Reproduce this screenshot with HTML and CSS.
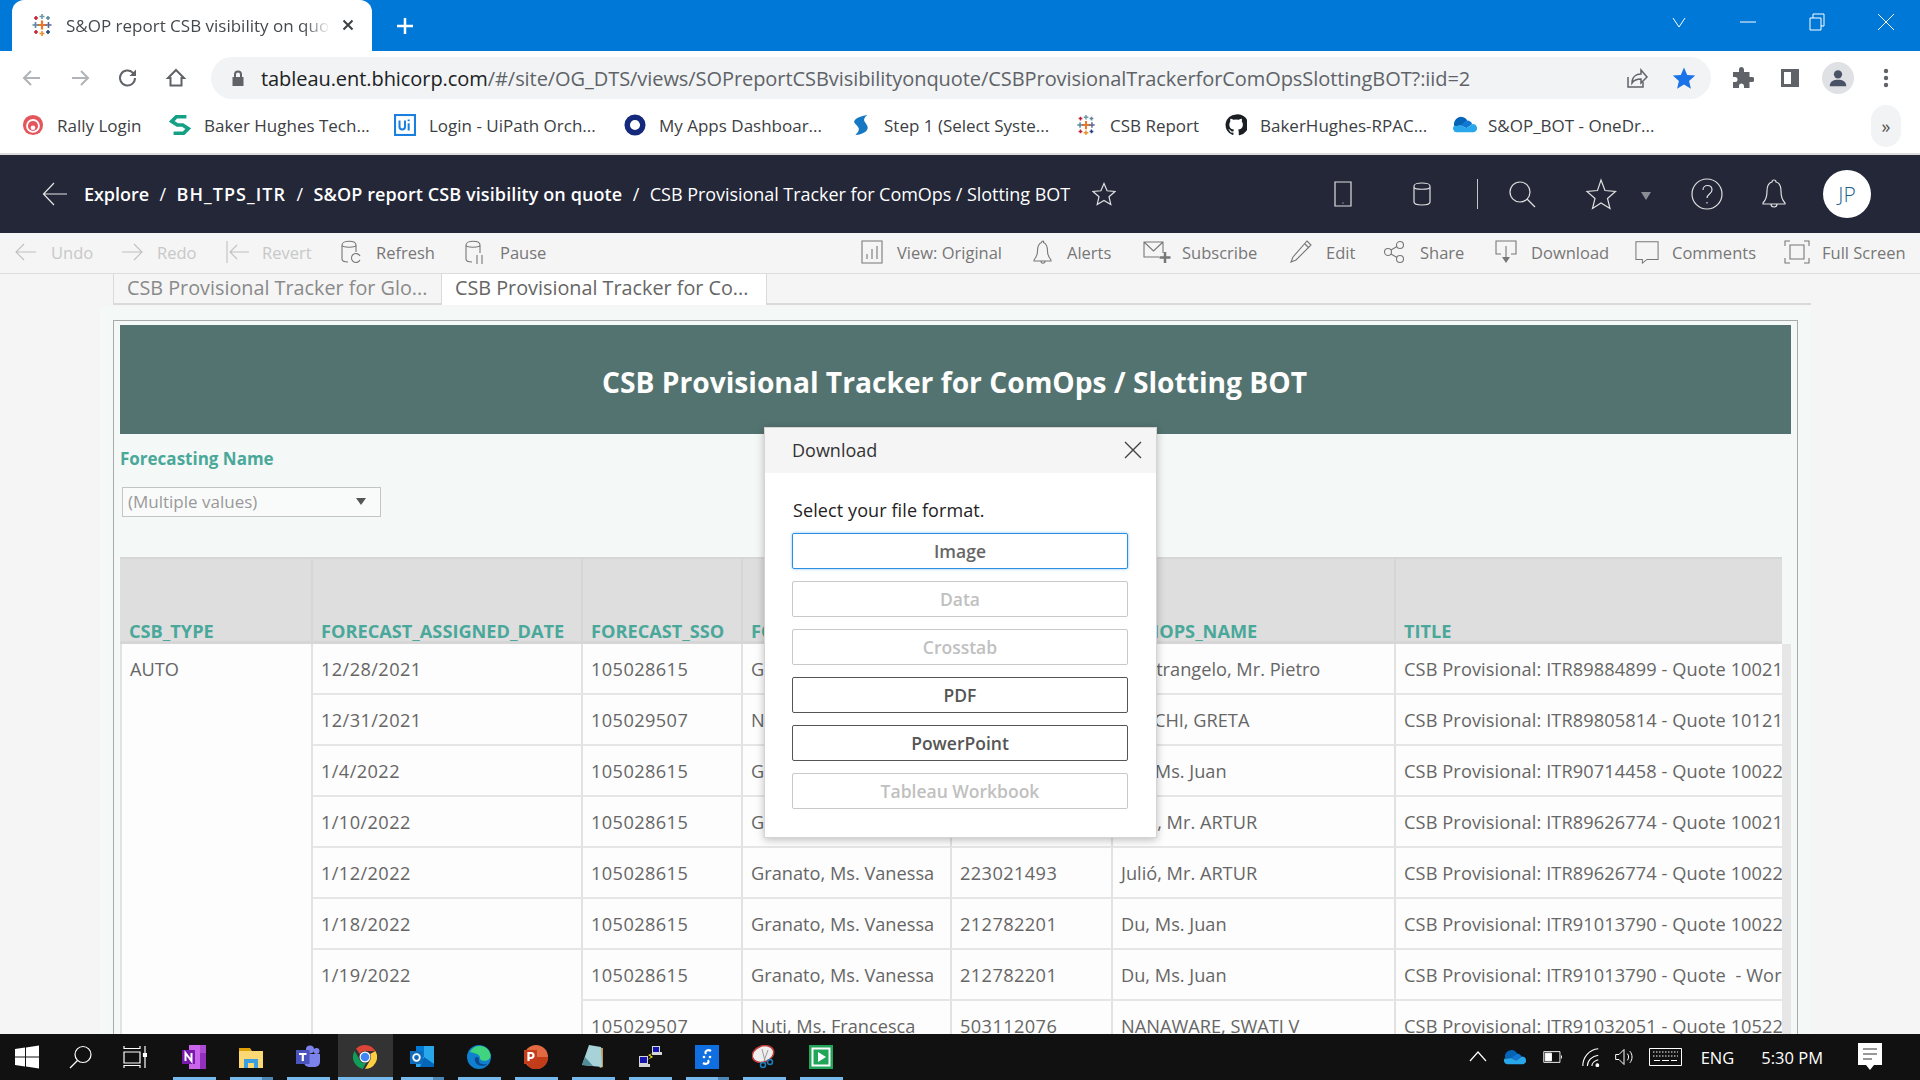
FILE: index.html
```html
<!DOCTYPE html>
<html lang="en">
<head>
<meta charset="utf-8">
<title>S&amp;OP report CSB visibility on quote</title>
<link rel="stylesheet" href="styles.css">
</head>
<body>
<svg class="defs" width="0" height="0" aria-hidden="true">
  <symbol id="tableau" viewBox="0 0 24 24">
    <g fill="none" stroke-width="1.6">
      <path d="M12 7.500v9M7.500 12h9" stroke="#e8762d" stroke-width="2.200"/>
      <path d="M5.500 9v6M2.500 12h6" stroke="#5b879b"/>
      <path d="M18.500 9v6M15.500 12h6" stroke="#5b6591"/>
      <path d="M12 1v5M9.500 3.500h5" stroke="#7099a6"/>
      <path d="M12 18v5M9.500 20.500h5" stroke="#eb912b"/>
      <path d="M6 3v4M4 5h4" stroke="#c72035"/>
      <path d="M18 3v4M16 5h4" stroke="#59879b"/>
      <path d="M6 17v4M4 19h4" stroke="#c72035"/>
      <path d="M18 17v4M16 19h4" stroke="#1f457e"/>
    </g>
  </symbol>
  <symbol id="onedrive" viewBox="0 0 32 24">
    <path d="M13 2a8 8 0 0 1 7 4.500l-7 6-9 1A9 9 0 0 1 13 2z" fill="#0364b8"/>
    <path d="M20 6.500a6.500 6.500 0 0 1 6 4.500l-7 5-7-3.500z" fill="#0f78d4"/>
    <path d="M4 13.500l8-1 7 3.500 7-5a5 5 0 0 1 3 9.500 4 4 0 0 1-2 .5H7a5 5 0 0 1-3-8.500z" fill="#28a8ea"/>
  </symbol>
</svg>

<header class="tabstrip">
  <div class="tab">
    <svg class="ico24"><use href="#tableau"/></svg>
    <span class="tab-title">S&amp;OP report CSB visibility on quote</span>
    <svg class="tab-x" viewBox="0 0 12 12"><path d="M1.500 1.500l9 9M10.500 1.500l-9 9"/></svg>
  </div>
  <svg class="newtab" viewBox="0 0 18 18"><path d="M9 1v16M1 9h16"/></svg>
  <div class="winbtns">
    <svg class="win-ico" viewBox="0 0 20 20"><path d="M4 6l6 9 6-9"/></svg>
    <svg class="win-ico" viewBox="0 0 20 20"><path d="M2 10h16"/></svg>
    <svg class="win-ico" viewBox="0 0 20 20"><path d="M3 6h11v12H3zM6 6V2h11v12h-3"/></svg>
    <svg class="win-ico" viewBox="0 0 20 20"><path d="M2 2l16 16M18 2L2 18"/></svg>
  </div>
</header>

<nav class="omnibar">
  <svg class="nav-ico dim" viewBox="0 0 24 24"><path d="M20 12H5M11 5l-7 7 7 7"/></svg>
  <svg class="nav-ico dim" viewBox="0 0 24 24"><path d="M4 12h15M13 5l7 7-7 7"/></svg>
  <svg class="nav-ico" viewBox="0 0 24 24"><path d="M19 12a7.500 7.500 0 1 1-2.300-5.400L19 9"/><path class="solid" d="M20 3.500v6.500h-6.500z"/></svg>
  <svg class="nav-ico" viewBox="0 0 24 24"><path d="M12 4l8 8h-2.500v7.500h-11V12H4z"/></svg>
  <div class="urlbar">
    <svg class="lock" viewBox="0 0 14 18"><path d="M3 8V5.500a4 4 0 0 1 8 0V8h1.500v9h-11V8zm2 0h4V5.500a2 2 0 0 0-4 0z"/></svg>
    <div class="url"><span class="host">tableau.ent.bhicorp.com</span>/#/site/OG_DTS/views/SOPreportCSBvisibilityonquote/CSBProvisionalTrackerforComOpsSlottingBOT?:iid=2</div>
    <svg class="nav-ico small" viewBox="0 0 24 24"><path d="M4 11v10h15v-5"/><path d="M8 17c0-6 4-9 9-9V4l6 7-6 6v-4c-4 0-7 1-9 4z"/></svg>
    <svg class="bm-star" viewBox="0 0 24 24"><path d="M12 1.500l3.200 7.400 8 .7-6.100 5.300 1.800 7.900L12 18.600l-6.900 4.200 1.800-7.900L.8 9.600l8-.7z"/></svg>
  </div>
  <div class="ext-icons">
    <svg class="ext" viewBox="0 0 24 24"><path d="M9 3.500a2.500 2.500 0 0 1 5 0V6h5.500v5H22a2.500 2.500 0 0 1 0 5h-2.500v6H14v-2a2.500 2.500 0 0 0-5 0v2H3v-6h2a2.500 2.500 0 0 0 0-5H3V6h6z"/></svg>
    <svg class="ext" viewBox="0 0 24 24"><path d="M3 3h18v18H3zm3 3v12h7V6z" fill-rule="evenodd"/></svg>
    <span class="profile"><svg viewBox="0 0 24 24"><circle cx="12" cy="8" r="4.500"/><path d="M3 21c0-5 4-7 9-7s9 2 9 7z"/></svg></span>
    <svg class="ext" viewBox="0 0 24 24"><circle cx="12" cy="5" r="2.200"/><circle cx="12" cy="12" r="2.200"/><circle cx="12" cy="19" r="2.200"/></svg>
  </div>
</nav>

<nav class="bookmarks">
  <div class="bm"><svg class="fav" viewBox="0 0 24 24"><circle cx="12" cy="12" r="11" fill="#e4565c"/><circle cx="12" cy="13" r="6.500" fill="none" stroke="#fff" stroke-width="2"/><circle cx="12" cy="15" r="2.500" fill="#fff"/></svg>Rally Login</div>
  <div class="bm"><svg class="fav" viewBox="0 0 24 24"><path d="M19 3H8L3 8l6 4h6l6 4-5 5H5" fill="none" stroke="#14a085" stroke-width="4"/></svg>Baker Hughes Tech...</div>
  <div class="bm"><svg class="fav" viewBox="0 0 24 24"><rect x="1" y="1" width="22" height="22" fill="#fff" stroke="#1b7fe0" stroke-width="2.500"/><path d="M6 7v7a3 3 0 0 0 6 0V7M16 10v8M16 6v2" fill="none" stroke="#1b7fe0" stroke-width="2.200"/></svg>Login - UiPath Orch...</div>
  <div class="bm"><svg class="fav" viewBox="0 0 24 24"><circle cx="12" cy="12" r="8.500" fill="#fff" stroke="#14297c" stroke-width="6"/></svg>My Apps Dashboar...</div>
  <div class="bm"><svg class="fav" viewBox="0 0 24 24"><path d="M20 1C8 3 3 7 7 11s6 6 0 12c9-1 15-5 13-10S13 7 20 1z" fill="#1678c2"/></svg>Step 1 (Select Syste...</div>
  <div class="bm"><svg class="fav"><use href="#tableau"/></svg>CSB Report</div>
  <div class="bm"><svg class="fav" viewBox="0 0 24 24"><path fill="#1b1f23" d="M12 .5a11.500 11.500 0 0 0-3.600 22.400c.6.100.8-.3.800-.6v-2c-3.200.7-3.900-1.400-3.900-1.400-.5-1.300-1.300-1.700-1.300-1.700-1-.7.100-.7.100-.7 1.200.1 1.800 1.200 1.800 1.200 1 1.800 2.700 1.300 3.300 1 .1-.8.400-1.300.8-1.600-2.600-.3-5.300-1.300-5.300-5.700 0-1.300.5-2.300 1.200-3.100-.1-.3-.5-1.500.1-3.100 0 0 1-.3 3.200 1.200a11 11 0 0 1 5.800 0c2.200-1.500 3.200-1.200 3.200-1.200.6 1.600.2 2.800.1 3.100.7.800 1.200 1.900 1.200 3.100 0 4.400-2.700 5.400-5.300 5.700.4.400.8 1.100.8 2.200v3.300c0 .3.200.7.800.6A11.500 11.500 0 0 0 12 .5z"/></svg>BakerHughes-RPAC...</div>
  <div class="bm narrow-gap"><svg class="fav wide"><use href="#onedrive"/></svg>S&amp;OP_BOT - OneDr...</div>
  <span class="bm-more">»</span>
</nav>

<section class="t-header">
  <svg class="t-back" viewBox="0 0 26 26"><path d="M25 13H2M12 2L1.500 13 12 24"/></svg>
  <div class="crumbs"><b>Explore</b><i>/</i><b class="wide-crumb">BH_TPS_ITR</b><i>/</i><b class="report-crumb">S&amp;OP report CSB visibility on quote</b><i>/</i><span>CSB Provisional Tracker for ComOps / Slotting BOT</span></div>
  <svg class="t-ico star-s" viewBox="0 0 24 24"><path d="M12 1.500l3.100 7.300 7.900.7-6 5.200 1.800 7.800L12 18.400l-6.800 4.100L7 14.700l-6-5.200 7.900-.7z"/></svg>
  <div class="t-right">
    <svg class="t-ico" viewBox="0 0 28 28"><path d="M6 2h16v24H6zM13.500 23h1"/></svg>
    <svg class="t-ico" viewBox="0 0 28 28"><path d="M6 6v16c0 4 16 4 16 0V6c0-4-16-4-16 0zm0 1c0 3 16 3 16 0"/></svg>
    <span class="t-divider"></span>
    <svg class="t-ico" viewBox="0 0 28 28"><circle cx="12" cy="12" r="10"/><path d="M19 19l8 8"/></svg>
    <svg class="t-ico big" viewBox="0 0 32 32"><path d="M16 2l4 10.500 10.500 1-8 7 2.500 10L16 25l-8.500 5.500L10 20.500l-8-7 10.500-1z"/></svg>
    <span class="t-caret"></span>
    <svg class="t-ico big" viewBox="0 0 32 32"><circle cx="16" cy="16" r="15"/><path d="M12 12c0-6 9-6 9 0 0 4-5 4-5 8M16 24v1.500"/></svg>
    <svg class="t-ico big" viewBox="0 0 32 32"><path d="M16 2c-1.500 0-2 1-2 2-4 1-5 5-5 9 0 6-1 9-4 12v1h22v-1c-3-3-4-6-4-12 0-4-1-8-5-9 0-1-.5-2-2-2zM13 26c0 4 6 4 6 0"/></svg>
    <span class="avatar">JP</span>
  </div>
</section>

<section class="toolbar">
  <div class="tool off"><svg viewBox="0 0 24 24"><path d="M22 12H2M10 4l-8 8 8 8"/></svg>Undo</div>
  <div class="tool off"><svg viewBox="0 0 24 24"><path d="M2 12h20M14 4l8 8-8 8"/></svg>Redo</div>
  <div class="tool off"><svg viewBox="0 0 24 24"><path d="M2 1v22M24 12H5M12 5l-7 7 7 7"/></svg>Revert</div>
  <div class="tool"><svg viewBox="0 0 24 24"><path d="M3 5c0-5 14-5 14 0v7M3 5c0 3 14 3 14 0M3 5v14c0 2 3 3 6 3"/><path d="M21 16a4.500 4.500 0 1 0 0 4"/></svg>Refresh</div>
  <div class="tool"><svg viewBox="0 0 24 24"><path d="M3 5c0-5 14-5 14 0v8M3 5c0 3 14 3 14 0M3 5v14c0 2 3 3 6 3M14 15v9M19 15v9"/></svg>Pause</div>
  <div class="tool"><svg viewBox="0 0 24 24"><path d="M2 1h20v22H2zM7 14v5M12 9v10M17 6v13"/></svg>View: Original</div>
  <div class="tool"><svg viewBox="0 0 24 24"><path d="M12 1c-1 0-1.500.7-1.500 1.500C7 4 6.500 8 6.500 11c0 4-1 6-3.500 9v1h17v-1c-2.500-3-3.500-5-3.500-9 0-3-.5-7-4-8.500C12.500 1.700 13 1 12 1zM10 21c0 3 4 3 4 0" transform="translate(1 0)"/></svg>Alerts</div>
  <div class="tool"><svg viewBox="0 0 28 24"><path d="M20 13V2H1v15h15M1 2l9.500 9L20 2"/><path d="M22 12v11M16.500 17.500h11" stroke-width="2.500"/></svg>Subscribe</div>
  <div class="tool"><svg viewBox="0 0 24 24"><path d="M18 1l4 4L7 20l-5 2 2-5zM15.500 3.500l4.500 4.500"/></svg>Edit</div>
  <div class="tool"><svg viewBox="0 0 24 24"><circle cx="17" cy="5" r="3.500"/><circle cx="5" cy="12" r="3.500"/><circle cx="17" cy="19" r="3.500"/><path d="M8 10l6-3.500M8 14l6 3.500"/></svg>Share</div>
  <div class="tool"><svg viewBox="0 0 24 24"><path d="M7 14H2V1h20v13h-5M12 6v15"/><path class="fillp" d="M8 17h8l-4 6z"/></svg>Download</div>
  <div class="tool"><svg viewBox="0 0 26 26"><path d="M1 2h24v19H13l-5 4v-4H1z"/></svg>Comments</div>
  <div class="tool"><svg viewBox="0 0 26 24"><path d="M1 6V1h5M20 1h5v5M1 18v5h5M25 18v5h-5M6 5h14v14H6z"/></svg>Full Screen</div>
</section>

<main class="workspace">
  <div class="sheet-tabs">
    <div class="sheet">CSB Provisional Tracker for Glo...</div>
    <div class="sheet active">CSB Provisional Tracker for Co...</div>
  </div>
  <div class="canvas">
    <div class="frame">
      <h1 class="banner">CSB Provisional Tracker for ComOps / Slotting BOT</h1>
      <div class="filter-title">Forecasting Name</div>
      <div class="filter-box"><span>(Multiple values)</span><i></i></div>
      <div class="table-wrap">
        <table class="data">
          <colgroup><col class="c1"><col class="c2"><col class="c3"><col class="c4"><col class="c5"><col class="c6"><col class="c7"></colgroup>
          <thead><tr><th class="first">CSB_TYPE</th><th>FORECAST_ASSIGNED_DATE</th><th>FORECAST_SSO</th><th>FORECAST_NAME</th><th>COMOPS_SSO</th><th class="tight">COMOPS_NAME</th><th>TITLE</th></tr></thead>
          <tbody>
            <tr><td class="type" rowspan="8">AUTO</td><td class="n">12/28/2021</td><td class="n">105028615</td><td>Granato, Ms. Vanessa</td><td class="n">223021493</td><td>Mastrangelo, Mr. Pietro</td><td>CSB Provisional: ITR89884899 - Quote 10021</td></tr>
            <tr><td class="n">12/31/2021</td><td class="n">105029507</td><td>Nuti, Ms. Francesca</td><td class="n">503112076</td><td>SACCHI, GRETA</td><td>CSB Provisional: ITR89805814 - Quote 10121</td></tr>
            <tr><td class="n">1/4/2022</td><td class="n">105028615</td><td>Granato, Ms. Vanessa</td><td class="n">212782201</td><td>Du, Ms. Juan</td><td>CSB Provisional: ITR90714458 - Quote 10022</td></tr>
            <tr><td class="n">1/10/2022</td><td class="n">105028615</td><td>Granato, Ms. Vanessa</td><td class="n">223021493</td><td>Julió, Mr. ARTUR</td><td>CSB Provisional: ITR89626774 - Quote 10021</td></tr>
            <tr><td class="n">1/12/2022</td><td class="n">105028615</td><td>Granato, Ms. Vanessa</td><td class="n">223021493</td><td>Julió, Mr. ARTUR</td><td>CSB Provisional: ITR89626774 - Quote 10022</td></tr>
            <tr><td class="n">1/18/2022</td><td class="n">105028615</td><td>Granato, Ms. Vanessa</td><td class="n">212782201</td><td>Du, Ms. Juan</td><td>CSB Provisional: ITR91013790 - Quote 10022</td></tr>
            <tr><td class="n span2" rowspan="2">1/19/2022</td><td class="n">105028615</td><td>Granato, Ms. Vanessa</td><td class="n">212782201</td><td>Du, Ms. Juan</td><td>CSB Provisional: ITR91013790 - Quote &nbsp;- Workflow</td></tr>
            <tr><td class="n">105029507</td><td>Nuti, Ms. Francesca</td><td class="n">503112076</td><td>NANAWARE, SWATI V</td><td>CSB Provisional: ITR91032051 - Quote 10522</td></tr>
          </tbody>
        </table>
        <div class="v-scroll"></div>
      </div>
    </div>
  </div>
  <div class="dialog">
    <div class="dlg-head"><span>Download</span><svg viewBox="0 0 18 18"><path d="M1 1l16 16M17 1L1 17"/></svg></div>
    <div class="dlg-body">
      <p>Select your file format.</p>
      <button class="btn focus">Image</button>
      <button class="btn off">Data</button>
      <button class="btn off">Crosstab</button>
      <button class="btn on">PDF</button>
      <button class="btn on">PowerPoint</button>
      <button class="btn off">Tableau Workbook</button>
    </div>
  </div>
</main>

<footer class="taskbar">
  <div class="sys"><svg viewBox="0 0 24 24" class="tb"><path fill="#fff" d="M0 4l10-1.400V11.500H0zM11 2.400L24 .5v11H11zM0 12.500h10v8.900L0 20zM11 12.500h13v11l-13-1.900z"/></svg></div>
  <div class="sys"><svg viewBox="0 0 24 24" class="tb line"><circle cx="14" cy="9.500" r="8"/><path d="M8.500 15.500L1 23"/></svg></div>
  <div class="sys"><svg viewBox="0 0 24 24" class="tb line"><path d="M1 1v2.500h16V1M1 7h16v11H1zM1 23v-2.500h16V23M22 1v8M22 12v11"/><path d="M20.500 8.500h3v3h-3z" fill="#fff"/></svg></div>
  <div class="apps">
    <div class="app"><svg viewBox="0 0 24 24" class="tb"><path fill="#ca64ea" d="M7 0h17v24H7z"/><path fill="#ae4bd5" d="M18 0h6v8h-6z"/><path fill="#7719aa" d="M18 16h6v8h-6zM18 8h6v8h-6z" opacity=".7"/><path fill="#7719aa" d="M0 5h13v14H0z"/><path stroke="#fff" stroke-width="2" fill="none" d="M3.500 16V8l6 8V8"/></svg></div>
    <div class="app split"><svg viewBox="0 0 24 24" class="tb"><path fill="#e0a106" d="M0 3h11l2 3H0z"/><path fill="#fcd874" d="M0 6h24v17H0z"/><path fill="#3a9ee0" d="M5 23v-9h14v9h-4v-5H9v5z"/></svg></div>
    <div class="app"><svg viewBox="0 0 24 24" class="tb"><circle cx="20.500" cy="6" r="3" fill="#7b83eb"/><circle cx="14" cy="4.500" r="4" fill="#7b83eb"/><path fill="#7b83eb" d="M8 9h16v8a5 5 0 0 1-5 5h-6a5 5 0 0 1-5-5z"/><path fill="#4b53bc" d="M0 5h13.500v14H0z"/><path stroke="#fff" stroke-width="2.200" fill="none" d="M3 9h7.500M6.800 9v7"/></svg></div>
    <div class="app active"><svg viewBox="0 0 24 24" class="tb"><path fill="#db4437" d="M12 0a12 12 0 0 1 10.400 6H12a6 6 0 0 0-5.200 3L3 3.500A12 12 0 0 1 12 0z"/><path fill="#0f9d58" d="M1.600 6l5.200 9a6 6 0 0 0 6.200 3l-3.200 5.900A12 12 0 0 1 1.600 6z"/><path fill="#ffcd40" d="M22.400 6A12 12 0 0 1 12 24l5.200-9a6 6 0 0 0 0-6z"/><circle cx="12" cy="12" r="5.500" fill="#fff"/><circle cx="12" cy="12" r="4.300" fill="#4285f4"/></svg></div>
    <div class="app split"><svg viewBox="0 0 24 24" class="tb"><path fill="#28a8ea" d="M6 1h18v21H6z"/><path fill="#0078d4" d="M6 1h8v11H6z"/><path fill="#0364b8" d="M14 12l10 7v3H10z"/><path fill="#0f6cbd" d="M0 6h13v13H0z"/><circle cx="6.500" cy="12.500" r="3.300" fill="none" stroke="#fff" stroke-width="1.800"/></svg></div>
    <div class="app"><svg viewBox="0 0 24 24" class="tb"><circle cx="12" cy="12" r="12" fill="#0f7fd0"/><path fill="#3fd47d" d="M3 7a11 11 0 0 1 20 1c2 5-2 8-5 8s-6-1-5-4c-1-3-6-4-10-5z"/><path fill="#0c4a8f" d="M8 13c-1 5 3 8 8 8 2 0 3-1 4-2-4 1-9 0-8-5 0-2-3-3-4-1z"/></svg></div>
    <div class="app"><svg viewBox="0 0 24 24" class="tb"><circle cx="12" cy="12" r="12" fill="#e26a43"/><path fill="#c33c1a" d="M12 12h12a12 12 0 0 1-21 8z"/><path fill="#c43e1c" d="M0 5h13v14H0z"/><path stroke="#fff" stroke-width="2.200" fill="none" d="M4.500 16V8h2.500a2.500 2.500 0 0 1 0 5H4.500"/></svg></div>
    <div class="app"><svg viewBox="0 0 24 24" class="tb"><path fill="#c09a5c" d="M8 2l14 1v19l-3 1z"/><path fill="#a7d2d8" d="M8 0l12 2 1 20-20-2z"/><path fill="#4f8c98" d="M4 12l8 9-11-1z"/></svg></div>
    <div class="app"><svg viewBox="0 0 24 24" class="tb"><path fill="#d5d5d5" d="M14 1h8v6h2v3H14z"/><path fill="#1414b0" d="M15 2h6v5h-6z"/><path fill="#d5d5d5" d="M1 11h9v8H1v3h11v-3H1z"/><path fill="#1414b0" d="M2 12h7v6H2z"/><path fill="#f5ea1b" d="M15 8l-5 2 3 2-4 3 6-3-3-2z"/></svg></div>
    <div class="app split"><svg viewBox="0 0 24 24" class="tb"><rect width="24" height="24" fill="#0f6fe0"/><path d="M16 6c-3-2-7 0-5 3M8 18c3 2 7 0 5-3" fill="none" stroke="#fff" stroke-width="2.200"/><circle cx="9" cy="12" r="1.300" fill="#fff"/><circle cx="15" cy="12" r="1.300" fill="#fff"/></svg></div>
    <div class="app"><svg viewBox="0 0 24 24" class="tb"><ellipse cx="11" cy="9" rx="11" ry="8" fill="#eee" stroke="#c23a3a" stroke-width="1.500" transform="rotate(-20 11 9)"/><path d="M10 4l3 12M16 5l-4 11" stroke="#999" fill="none"/><circle cx="11" cy="20" r="2.500" fill="none" stroke="#1b80c0" stroke-width="1.500"/><circle cx="18" cy="17" r="2.500" fill="none" stroke="#1b80c0" stroke-width="1.500"/></svg></div>
    <div class="app"><svg viewBox="0 0 24 24" class="tb"><rect width="24" height="24" fill="#21a559"/><rect x="2.500" y="2.500" width="19" height="19" fill="#fff"/><rect x="4.500" y="4.500" width="15" height="15" fill="#21a559"/><path d="M9 7l8 5-8 5z" fill="#fff"/></svg></div>
  </div>
  <div class="tray">
    <svg class="tr caret-up" viewBox="0 0 20 20"><path d="M2 14l8-9 8 9"/></svg>
    <svg class="tr cloud"><use href="#onedrive"/></svg>
    <svg class="tr battery" viewBox="0 0 26 20"><path d="M1 3h21v14H1zM24 8v4"/><path d="M3 5h8v10H3z" fill="#fff"/></svg>
    <svg class="tr wifi" viewBox="0 0 22 22"><path d="M2 21C2 11 9 3 19 2M7 21c0-6 5-11 12-12M12 21c0-3 3-6 7-7"/><circle cx="18" cy="20" r="1.500" fill="#fff"/></svg>
    <svg class="tr volume" viewBox="0 0 24 24"><path d="M2 9v6h4l6 6V3L6 9zM16 8c2 2 2 6 0 8M19 5c3.500 4 3.500 10 0 14"/></svg>
    <svg class="tr kbd" viewBox="0 0 33 18"><path d="M.5.5h32v17H.5zM5 12.500h6M13 12.500h7M22 12.500h6"/><path d="M4 4h25M4 8h25" stroke-dasharray="1.500 1.500"/></svg>
    <span class="eng">ENG</span>
    <span class="clock">5:30 PM</span>
    <svg class="tr note" viewBox="0 0 24 28"><path class="fillw" d="M0 0h24v22h-8l-4 5-4-5H0z"/><path d="M5 6h14M5 11h14M5 16h9" class="dk"/></svg>
  </div>
</footer>
</body>
</html>
```

FILE: styles.css
```css
* { box-sizing: border-box; }
html, body { margin: 0; height: 100%; }
body {
  width: 1920px; height: 1080px; overflow: hidden;
  display: flex; flex-direction: column;
  font-family: "Open Sans", "Noto Sans", sans-serif; color: #333;
  background: #f5f5f5; position: relative;
}
.defs { position: absolute; }
svg { display: block; flex: none; }

/* chrome tab strip */
.tabstrip { height: 51px; flex: none; background: #0078d7; display: flex; align-items: flex-end; padding-left: 12px; }
.tab { width: 360px; height: 51px; background: #fff; border-radius: 12px 12px 0 0; display: flex; align-items: center; padding: 0 18px 1px 18px; gap: 12px; }
.ico24 { width: 24px; height: 24px; }
.tab-title { flex: 1; font-size: 17px; color: #45494d; white-space: nowrap; overflow: hidden; -webkit-mask-image: linear-gradient(90deg, #000 90%, transparent); mask-image: linear-gradient(90deg, #000 90%, transparent); }
.tab-x { width: 12px; height: 12px; fill: none; stroke: #3c4043; stroke-width: 2; }
.newtab { width: 18px; height: 18px; margin: 0 0 16px 24px; fill: none; stroke: #fff; stroke-width: 2.500; }
.winbtns { margin-left: auto; display: flex; align-self: stretch; align-items: center; gap: 49px; padding: 0 24px 8px 0; }
.win-ico { width: 20px; height: 20px; fill: none; stroke: #fff; stroke-width: 1; }

/* omnibar */
.omnibar { height: 52px; flex: none; background: #fff; display: flex; align-items: center; padding: 2px 0 0 20px; gap: 24px; }
.nav-ico { width: 24px; height: 24px; fill: none; stroke: #5f6368; stroke-width: 2; }
.nav-ico.dim { stroke: #b0b3b7; }
.nav-ico .solid { fill: #5f6368; stroke: none; }
.nav-ico.small { stroke-width: 1.500; }
.urlbar { margin-left: -1px; margin-right: -5px; width: 1500px; height: 42px; border-radius: 21px; background: #f1f3f4; display: flex; align-items: center; padding: 0 15px 0 20px; gap: 16px; flex: none; }
.lock { width: 14px; height: 18px; fill: #5f6368; }
.url { flex: 1; font-size: 20px; color: #5f6368; white-space: nowrap; overflow: hidden; letter-spacing: -.065px; }
.host { color: #202124; }
.bm-star { width: 24px; height: 24px; fill: #1a73e8; margin-left: 8px; }
.ext-icons { display: flex; align-items: center; gap: 24px; }
.ext { width: 24px; height: 24px; fill: #5f6368; }
.profile { width: 32px; height: 32px; margin: 0 -4px; border-radius: 50%; background: #dfe1e5; display: flex; align-items: center; justify-content: center; }
.profile svg { width: 22px; height: 22px; fill: #4a5366; }

/* bookmarks */
.bookmarks { height: 50px; flex: none; background: #fff; display: grid; grid-template-columns: 147px 225px 230px 225px 226px 150px 226px 1fr; align-items: center; padding: 0 0 6px 22px; position: relative; }
.bm { display: flex; align-items: center; gap: 13px; font-size: 17px; color: #3c4043; white-space: nowrap; }
.bm.narrow-gap { gap: 11px; }
.fav { width: 22px; height: 22px; }
.fav.wide { width: 26px; height: 20px; }
.bm-more { position: absolute; right: 19px; top: 2px; width: 30px; height: 42px; border-radius: 15px; background: #f1f3f4; color: #555; display: flex; align-items: center; justify-content: center; font-size: 18px; }

/* tableau header */
.t-header { height: 80px; flex: none; border-top: 2px solid #dcdcdc; background: #232738; display: flex; align-items: center; padding: 0 0 0 42px; color: #fff; }
.t-back { width: 26px; height: 26px; fill: none; stroke: #e6e6e6; stroke-width: 1.200; }
.crumbs { margin-left: 16px; display: flex; align-items: center; gap: 10.500px; font-size: 18px; white-space: nowrap; letter-spacing: -.05px; }
.crumbs b { font-weight: 600; }
.crumbs b.wide-crumb { letter-spacing: 1.050px; }
.crumbs b.report-crumb { letter-spacing: .1px; }
.crumbs i { font-style: normal; }
.t-ico { width: 28px; height: 28px; fill: none; stroke: #e0e0e0; stroke-width: 1.200; }
.t-ico.star-s { width: 24px; height: 24px; margin-left: 22px; }
.t-right { margin-left: auto; display: flex; align-items: center; padding-right: 49px; }
.t-right > :nth-child(2) { margin-left: 51px; }
.t-divider { width: 1px; height: 30px; background: #c8c8c8; margin: 0 30px 0 41px; }
.t-ico.big { width: 32px; height: 32px; }
.t-right > :nth-child(5) { margin-left: 49px; }
.t-caret { margin: 4px 40px 0 24px; border: 5px solid transparent; border-top: 8px solid #8a8c96; border-bottom: 0; }
.t-right > :nth-child(8) { margin-left: 35px; }
.avatar { margin-left: 33px; width: 48px; height: 48px; border-radius: 50%; background: #fff; color: #1f5f8f; display: flex; align-items: center; justify-content: center; font-size: 21px; font-weight: 300; }

/* toolbar */
.toolbar { height: 41px; flex: none; background: #f5f5f5; border-bottom: 1px solid #dcdcdc; display: grid; grid-template-columns: 106px 105px 114px 124px 397px 170px 115px 144px 94px 111px 141px 150px 1fr; padding: 0 0 2px 11px; align-items: center; font-size: 16.500px; color: #777; white-space: nowrap; }
.tool { display: flex; align-items: center; gap: 10px; }
.tool svg { width: 30px; height: 24px; fill: none; stroke: #777; stroke-width: 1.100; }
.tool .fillp { fill: #777; stroke: none; }
.tool.off { color: #c8c8c8; }
.tool.off svg { stroke: #c0c0c0; }

/* workspace */
.workspace { flex: 1; min-height: 0; overflow: hidden; position: relative; background: #f5f5f5; display: flex; flex-direction: column; }
.sheet-tabs { height: 29px; flex: none; margin: 0 109px 0 113px; display: flex; border-bottom: 2px solid #dadada; box-sizing: content-box; }
.sheet { width: 328px; height: 29px; padding: 0 0 2px 13px; display: flex; align-items: center; font-size: 19.800px; color: #8a8a8a; border-left: 1px solid #dadada; white-space: nowrap; }
.sheet.active { width: 326px; background: #fff; color: #666; border-right: 1px solid #dadada; height: 31px; margin-bottom: -2px; padding-bottom: 4px; }
.canvas { flex: 1; min-height: 0; margin: 2px 109px 0 100px; background: #f4f8f7; padding: 13px 13px 0 13px; overflow: hidden; }
.frame { height: 100%; border: 1px solid #a8abab; border-bottom: 0; padding: 4px 0 0 6px; }
.banner { margin: 0 6px 0 0; height: 109px; background: #537370; color: #fff; display: flex; align-items: center; justify-content: center; font-size: 28.200px; font-weight: 700; padding: 4px 2px 0 0; }
.filter-title { font-size: 17px; font-weight: 700; color: #4aa89a; margin-top: 12px; line-height: 25px; }
.filter-box { margin: 16px 0 0 2px; width: 259px; height: 30px; border: 1px solid #c4c4c4; background: #f9fbfb; display: flex; align-items: center; justify-content: space-between; padding: 0 12px 2px 5px; font-size: 17px; color: #999; }
.filter-box i { border: 5px solid transparent; border-top: 7px solid #555; border-bottom: 0; margin-right: 2px; }
.table-wrap { margin-top: 40px; width: 1671px; position: relative; overflow: hidden; flex: 1; }
.data { table-layout: fixed; width: 1662px; border-collapse: separate; border-spacing: 0; font-size: 18.200px; color: #666; }
.c1 { width: 193px; } .c2 { width: 270px; } .c3 { width: 160px; } .c4 { width: 209px; } .c5 { width: 161px; } .c6 { width: 283px; } .c7 { width: 386px; }
.data th { height: 87px; background: #dedede; color: #4aa89a; font-size: 18.200px; line-height: 20px; font-weight: 700; text-align: left; vertical-align: bottom; padding: 0 0 0 8px; border-top: 2px solid #d6d6d6; border-right: 2px solid #d6d6d6; border-bottom: 3px solid #d6d6d6; white-space: nowrap; overflow: hidden; }
.data th.first { padding-left: 9px; }
.data th.tight { padding-left: 3px; }
.data th:last-child { border-right: 0; }
.data td { height: 51px; background: #fdfdfd; padding: 0 0 0 8px; border-right: 2px solid #e2e2e2; border-bottom: 2px solid #e6e6e6; white-space: nowrap; overflow: hidden; vertical-align: middle; }
.data td.n { letter-spacing: .4px; }
.data td.type { vertical-align: top; padding-top: 13px; border-left: 2px solid #e2e2e2; }
.data td.span2 { vertical-align: top; padding-top: 13px; border-bottom: 0; }
.data td:last-child { border-right: 0; letter-spacing: .1px; }
.v-scroll { position: absolute; left: 1662px; top: 87px; bottom: 0; width: 9px; background: #e6e6e6; }

/* dialog */
.dialog { position: absolute; left: 764px; top: 153px; width: 393px; height: 411px; background: #fff; border: 1px solid #d4d4d4; box-shadow: 0 2px 8px rgba(0,0,0,.25); }
.dlg-head { height: 45px; background: #f5f5f5; display: flex; align-items: center; justify-content: space-between; padding: 0 14px 2px 27px; font-size: 18px; color: #333; }
.dlg-head svg { width: 18px; height: 18px; fill: none; stroke: #444; stroke-width: 1.400; }
.dlg-body { padding: 0 28px 0 27px; display: flex; flex-direction: column; gap: 12px; }
.dlg-body p { margin: 25px 0 -2px 1px; font-size: 18px; line-height: 25px; color: #222; letter-spacing: .1px; }
.btn { height: 36px; background: #fff; border: 1px solid #c8c8c8; border-radius: 2px; font: 600 17.500px "Open Sans", "Noto Sans", sans-serif; color: #c0c0c0; padding: 0; }
.btn.on { border-color: #555; color: #555; }
.btn.focus { border: 1px solid #2c8fdf; box-shadow: 0 0 3px #7cc0f0; color: #666; }

/* taskbar */
.taskbar { height: 46px; flex: none; background: #111; display: flex; align-items: stretch; position: relative; }
.sys { width: 54px; display: flex; align-items: center; justify-content: center; }
.tb { width: 24px; height: 24px; }
.tb.line { fill: none; stroke: #fff; stroke-width: 1.200; }
.apps { display: flex; margin-left: 3.500px; }
.app { width: 57px; display: flex; align-items: center; justify-content: center; position: relative; }
.app::after { content: ""; position: absolute; left: 7px; right: 7px; bottom: 0; height: 3px; background: #76b9ed; }
.app.split::after { background: linear-gradient(90deg, #76b9ed 74%, #4e87b5 74%); }
.app.active { background: #333; margin: 0 1px; width: 55px; }
.app.active::after { left: 0; right: 0; }
.tray { margin-left: auto; display: flex; align-items: center; color: #fff; padding-right: 38px; }
.tr { width: 20px; height: 20px; fill: none; stroke: #fff; stroke-width: 1.200; }
.tr.caret-up { margin-right: 14px; }
.tr.cloud { width: 24px; height: 19px; stroke: none; margin-right: 17px; }
.tr.battery { margin-right: 18px; }
.tr.wifi { margin-right: 13px; }
.tr.volume { margin-right: 15px; }
.tr.kbd { width: 33px; height: 18px; stroke-width: 1; margin-right: 19px; }
.eng { font-size: 16.500px; margin: 0 27px 0 0; }
.clock { font-size: 16.500px; margin-right: 35px; }
.tr.note { width: 24px; height: 28px; stroke: none; }
.note .fillw { fill: #fff; }
.note .dk { stroke: #333; fill: none; }
```
